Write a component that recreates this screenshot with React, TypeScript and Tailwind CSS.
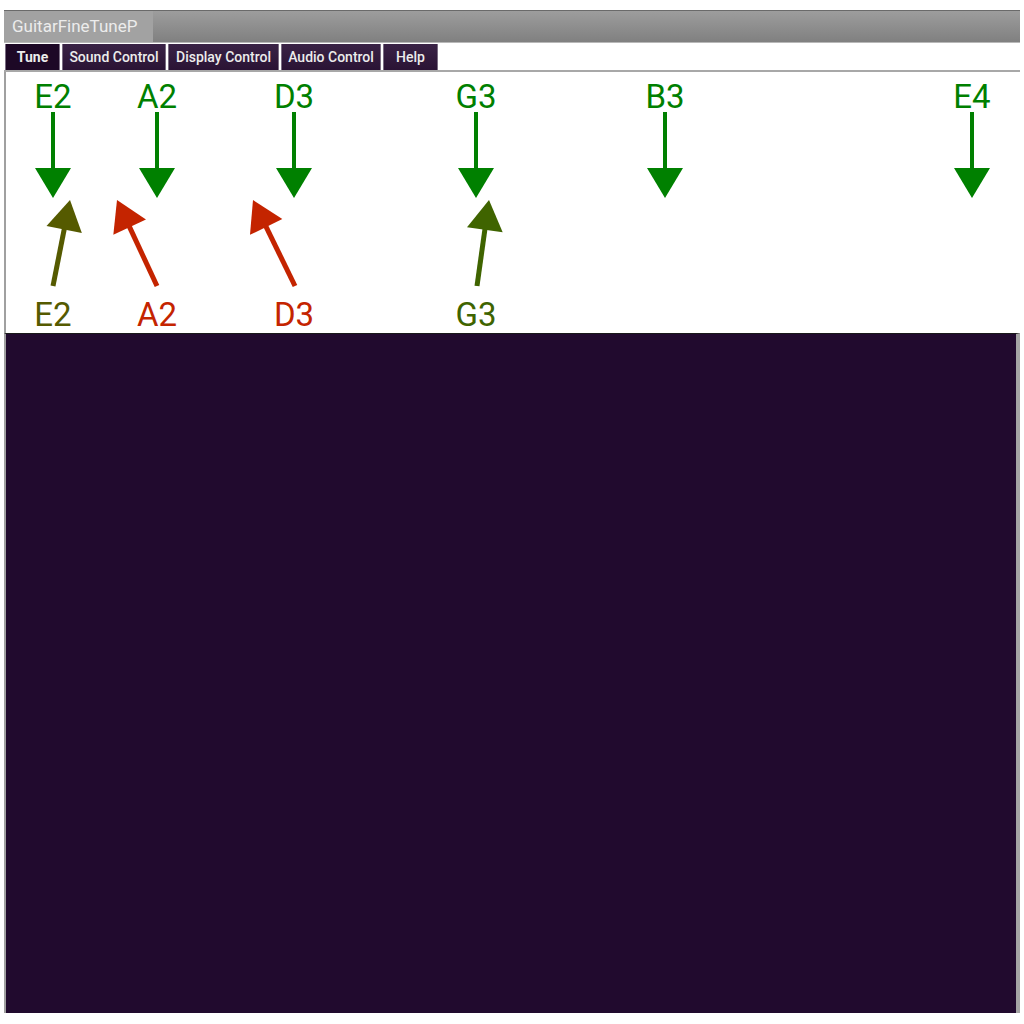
const tabs = ['Tune', 'Sound Control', 'Display Control', 'Audio Control', 'Help'];
const tabWidths = [55, 104, 111, 100, 55];

const targets = [
  { note: 'E2', x: 53 },
  { note: 'A2', x: 157 },
  { note: 'D3', x: 294 },
  { note: 'G3', x: 476 },
  { note: 'B3', x: 665 },
  { note: 'E4', x: 972 },
];

const detected = [
  { note: 'E2', tail: [53, 286], tip: [70, 200], color: '#555a00', label: 53 },
  { note: 'A2', tail: [157, 286], tip: [117, 200], color: '#c42400', label: 157 },
  { note: 'D3', tail: [295, 286], tip: [253, 200], color: '#c42400', label: 294 },
  { note: 'G3', tail: [477, 286], tip: [489, 200], color: '#3f6400', label: 476 },
];

function Arrow({ tail, tip, color }: { tail: number[]; tip: number[]; color: string }) {
  const dx = tip[0] - tail[0];
  const dy = tip[1] - tail[1];
  const len = Math.hypot(dx, dy);
  const ux = dx / len;
  const uy = dy / len;
  const bx = tip[0] - ux * 30;
  const by = tip[1] - uy * 30;
  const nx = -uy * 18;
  const ny = ux * 18;
  return (
    <g>
      <line x1={tail[0]} y1={tail[1]} x2={bx + ux * 2} y2={by + uy * 2} stroke={color} strokeWidth={5} />
      <polygon points={`${tip[0]},${tip[1]} ${bx + nx},${by + ny} ${bx - nx},${by - ny}`} fill={color} />
    </g>
  );
}

export default function App() {
  return (
    <div className="w-[1024px] h-[1024px] bg-white pt-[10px] pl-[4px] overflow-hidden" style={{ fontFamily: 'Roboto, "Liberation Sans", sans-serif' }}>
      <div className="w-[1016px]">
        {/* Title bar */}
        <div className="h-[33px] flex border-t border-[#6a6a6a] border-b border-b-[#b8b8b8] bg-gradient-to-b from-[#9d9d9d] to-[#808080]">
          <div className="w-[149px] bg-[#a2a2a2] text-[#ececec] text-[17px] leading-[31px] pl-[8px]">GuitarFineTuneP</div>
        </div>

        {/* Tabs */}
        <div className="h-[29px] flex items-stretch bg-white border-b-2 border-[#a8a8a8] pt-[1px]">
          {tabs.map((t, i) => (
            <div
              key={t}
              style={{ width: tabWidths[i] }}
              className={
                'ml-[1px] mr-[1px] flex items-center justify-center text-[14px] text-[#ececec] border-x border-[#7a6d82] ' +
                (i === 0 ? 'bg-[#1d0826] font-bold' : 'bg-gradient-to-b from-[#3a2346] to-[#2a1334] font-medium')
              }
            >
              {t}
            </div>
          ))}
        </div>

        {/* Tuner display */}
        <div className="h-[261px] border-l-2 border-[#a0a0a0] bg-white">
          <svg width="1014" height="261" viewBox="6 72 1014 261" className="block">
            {targets.map((t) => (
              <g key={t.note}>
                <text x={t.x} y={108} textAnchor="middle" fontSize={33} fill="#008000" fontFamily="Roboto, sans-serif">
                  {t.note}
                </text>
                <line x1={t.x} y1={112} x2={t.x} y2={170} stroke="#008000" strokeWidth={4} />
                <polygon points={`${t.x - 18},168 ${t.x + 18},168 ${t.x},198`} fill="#008000" />
              </g>
            ))}
            {detected.map((d) => (
              <g key={d.note}>
                <Arrow tail={d.tail} tip={d.tip} color={d.color} />
                <text x={d.label} y={326} textAnchor="middle" fontSize={33} fill={d.color} fontFamily="Roboto, sans-serif">
                  {d.note}
                </text>
              </g>
            ))}
          </svg>
        </div>

        {/* Spectrum */}
        <div className="h-[680px] bg-[#210a2e] border-l-2 border-[#a0a0a0] border-r-4 border-r-[#a4a4a4] border-t border-t-[#1a1a1a]" />
      </div>
    </div>
  );
}
